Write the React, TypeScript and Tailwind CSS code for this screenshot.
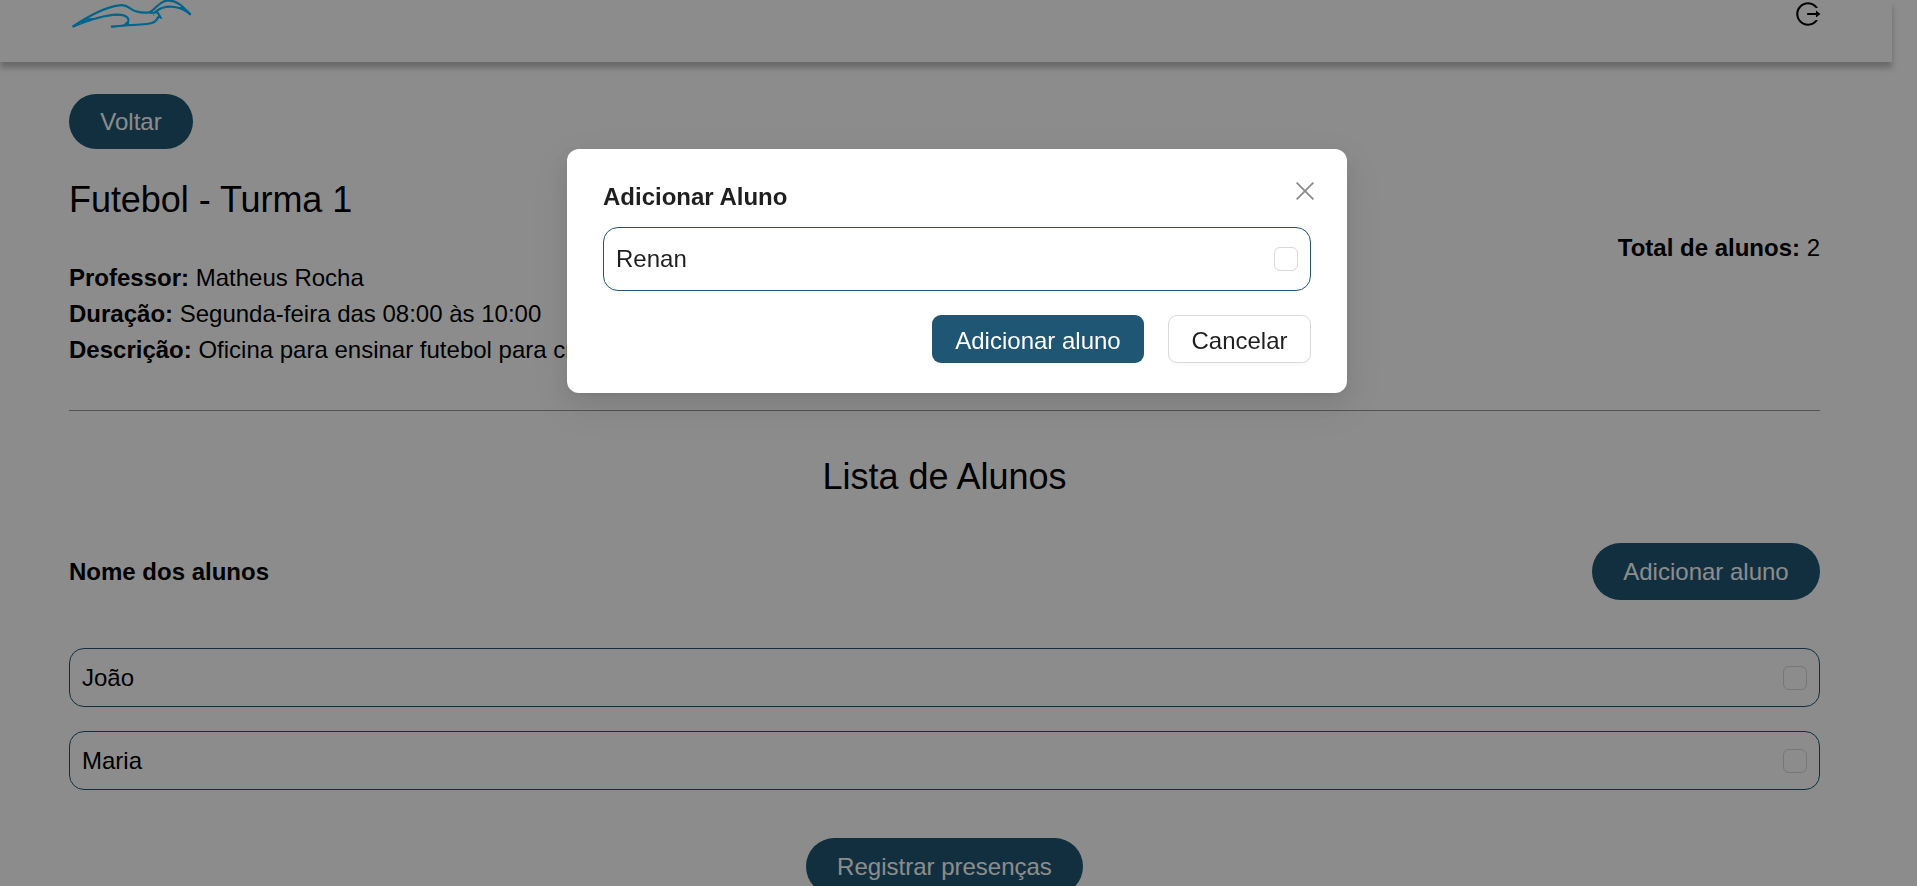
import { AiOutlineLogout } from "react-icons/ai";

const students = ["João", "Maria"];

function Logo() {
  return (
    <svg
      viewBox="60 0 372 90"
      className="h-[30px] w-[124px]"
      fill="none"
      stroke="#00b9ff"
      strokeWidth="6.5"
      strokeLinejoin="round"
      strokeLinecap="butt"
    >
      <path d="M68 80 C105 55 160 22 208 16 C246 11 232 39 292 38 C314 38 323 2 354 1 C384 1 403 25 422 44" />
      <path d="M422 44 C398 22 352 8 318 34 C327 38 326 47 333 54" />
      <path d="M325 50 C321 63 308 71 290 72 C260 74 230 76 183 80" />
      <path d="M225 72 C243 66 240 44 200 44 C160 45 115 61 68 80" />
      <path d="M298 39 L320 37" />
      <path d="M66 82 L112 55 L140 54 Z" fill="#00b9ff" stroke="none" />
      <path d="M180 83 C200 76 222 76 236 66 L238 77 Z" fill="#00b9ff" stroke="none" />
      <path d="M424 47 L396 18 L388 24 Z" fill="#00b9ff" stroke="none" />
      <path d="M338 58 L322 52 L328 42 Z" fill="#00b9ff" stroke="none" />
      <circle cx="311" cy="45" r="1" strokeWidth="2" />
    </svg>
  );
}

function Checkbox() {
  return <span className="size-6 shrink-0 rounded-md border border-[#d9d9d9] bg-white" />;
}

function StudentRow({ name, className }: { name: string; className: string }) {
  return (
    <li className={`flex items-center justify-between rounded-[15px] border border-[#1f5673] px-3 ${className}`}>
      <span>{name}</span>
      <Checkbox />
    </li>
  );
}

function PillButton({ label, className }: { label: string; className: string }) {
  return (
    <button className={`flex shrink-0 items-center justify-center rounded-full bg-[#1f5673] text-white ${className}`}>
      {label}
    </button>
  );
}

function AddStudentModal() {
  return (
    <div className="fixed inset-0 flex items-start justify-center bg-black/45 pr-[3px] pt-[149px]">
      <div
        role="dialog"
        className="relative flex h-[244px] w-[780px] flex-col rounded-xl bg-white px-9 pt-[30px] text-black/88 shadow-[0_9px_24px_0_rgba(0,0,0,0.08),0_4px_9px_-6px_rgba(0,0,0,0.12),0_13px_42px_12px_rgba(0,0,0,0.05)]"
      >
        <h2 className="h-9 font-bold leading-9">Adicionar Aluno</h2>
        <button className="absolute right-[33px] top-[33px] text-black/45" aria-label="Fechar">
          <svg viewBox="0 0 18 18" className="size-[18px]" fill="none" stroke="currentColor" strokeWidth="1.9">
            <path d="M0.6 0.6 L17.4 17.4 M17.4 0.6 L0.6 17.4" />
          </svg>
        </button>
        <ul className="mt-3">
          <StudentRow name="Renan" className="h-16" />
        </ul>
        <div className="mt-6 flex justify-end gap-6">
          <button className="h-12 w-[212px] rounded-[9px] bg-[#1f5673] pt-[3px] text-white shadow-[0_3px_0_rgba(0,0,0,0.02)]">
            Adicionar aluno
          </button>
          <button className="h-12 w-[143px] rounded-[9px] border border-[#d9d9d9] bg-white pt-[3px] shadow-[0_3px_0_rgba(0,0,0,0.02)]">
            Cancelar
          </button>
        </div>
      </div>
    </div>
  );
}

export default function App() {
  return (
    <div className="h-screen overflow-hidden bg-white font-['Liberation_Sans',Arial,sans-serif] text-[24px] leading-9 text-black">
      <header className="flex h-[62px] w-[1892px] items-start justify-between bg-white pl-[70px] pr-[70px] shadow-[0_6px_6px_rgba(0,0,0,0.25)]">
        <Logo />
        <AiOutlineLogout className="size-7" />
      </header>

      <main className="ml-[69px] flex w-[1751px] flex-col pt-8">
        <PillButton label="Voltar" className="h-[55px] w-[124px]" />

        <section className="mt-6 flex items-start justify-between">
          <div>
            <h1 className="text-[36px] leading-[54px] tracking-[-0.05px]">Futebol - Turma 1</h1>
            <div className="mt-[33px]">
              <p>
                <b>Professor:</b> Matheus Rocha
              </p>
              <p>
                <b>Duração:</b> Segunda-feira das 08:00 às 10:00
              </p>
              <p>
                <b>Descrição:</b> Oficina para ensinar futebol para crianças
              </p>
            </div>
          </div>
          <p className="mt-[57px]">
            <b>Total de alunos:</b> 2
          </p>
        </section>

        <hr className="mt-[42px] border-t border-[#999999]" />

        <h2 className="mt-[39px] text-center text-[36px] leading-[54px]">Lista de Alunos</h2>

        <div className="mt-[39px] flex items-center justify-between">
          <b>Nome dos alunos</b>
          <PillButton label="Adicionar aluno" className="h-[57px] w-[228px]" />
        </div>

        <ul className="mt-12 flex flex-col gap-6">
          {students.map((name) => (
            <StudentRow key={name} name={name} className="h-[59px]" />
          ))}
        </ul>

        <PillButton label="Registrar presenças" className="mt-12 h-[57px] w-[277px] self-center" />
      </main>

      <AddStudentModal />
    </div>
  );
}
